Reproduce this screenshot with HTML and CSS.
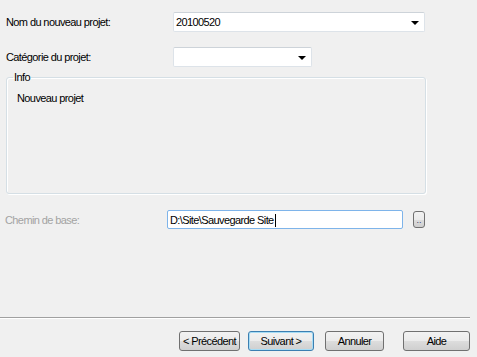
FILE: index.html
```html
<!DOCTYPE html>
<html lang="fr">

<head>
    <meta charset="UTF-8">
    <title>Nouveau projet</title>
    <link rel="stylesheet" href="styles.css">
</head>

<body>
    <div class="wizard">
        <div class="row row-name">
            <label class="lbl">Nom du nouveau projet:</label>
            <div class="combo combo-wide">
                <span class="combo-text">20100520</span>
                <span class="arrow"></span>
            </div>
        </div>

        <div class="row row-cat">
            <label class="lbl">Catégorie du projet:</label>
            <div class="combo combo-small">
                <span class="combo-text"></span>
                <span class="arrow"></span>
            </div>
        </div>

        <fieldset class="group">
            <legend class="group-title">Info</legend>
            <p class="group-text">Nouveau projet</p>
        </fieldset>

        <div class="row row-path">
            <label class="lbl lbl-off">Chemin de base:</label>
            <div class="textbox">D:\Site\Sauvegarde Site<span class="caret"></span></div>
            <button class="browse">..</button>
        </div>
    </div>

    <div class="footer">
        <button class="btn btn-prev">&lt; Précédent</button>
        <button class="btn btn-next">Suivant &gt;</button>
        <button class="btn btn-cancel">Annuler</button>
        <button class="btn btn-help">Aide</button>
    </div>
</body>

</html>
```

FILE: styles.css
```css
* {
    box-sizing: border-box;
    margin: 0;
}

body {
    width: 477px;
    height: 357px;
    background-color: #f0f0f0;
    font-family: "Liberation Sans", Arial, sans-serif;
    font-size: 11px;
    letter-spacing: -0.6px;
    color: #000;
    overflow: hidden;
}

.wizard {
    height: 317px;
    padding: 12px 0 0 6px;
}

.row {
    display: flex;
    align-items: center;
}

.lbl {
    width: 167px;
}

.lbl-off {
    color: #a3a3a3;
}

.row-cat {
    margin-top: 15px;
}

.combo {
    height: 20px;
    display: flex;
    align-items: center;
    justify-content: space-between;
    background-color: #fff;
    border: 1px solid #dde3e9;
    border-top-color: #cdd3d9;
    border-radius: 2px;
    padding: 0 5px 0 2px;
}

.combo-wide {
    width: 252px;
}

.combo-small {
    width: 139px;
}

.arrow {
    width: 0;
    height: 0;
    border-left: 4px solid transparent;
    border-right: 4px solid transparent;
    border-top: 4px solid #000;
    margin-top: 1px;
}

.group {
    width: 420px;
    height: 123px;
    margin-top: 4px;
    border: 1px solid #d5dfe5;
    border-radius: 3px;
    box-shadow: inset 1px 1px 0 #fff, 1px 1px 0 #fff;
    padding: 4px 10px;
}

.group-title {
    padding: 0 1px;
    margin-left: -4px;
}

.group-text {
    margin-top: 5px;
}

.row-path {
    margin-top: 16px;
    margin-left: -1px;
}

.row-path .lbl {
    width: 162px;
}

.textbox {
    width: 236px;
    height: 19px;
    background-color: #fff;
    border: 1px solid #7eb4ea;
    border-radius: 2px;
    padding: 2px 2px 0;
    display: flex;
    align-items: center;
    line-height: 13px;
}

.caret {
    display: inline-block;
    width: 1px;
    height: 13px;
    margin-left: 1px;
    background-color: #000;
}

.browse {
    width: 12px;
    height: 17px;
    margin-left: 10px;
    padding: 0;
    font-family: inherit;
    font-size: 9px;
    line-height: 17px;
    color: #3c3c6c;
    background: linear-gradient(#f2f2f2, #ebebeb 50%, #dddddd 51%, #cfcfcf);
    border: 1px solid #707070;
    border-radius: 3px;
}

.footer {
    width: 470px;
    border-top: 1px solid #a0a0a0;
    box-shadow: inset 0 1px 0 #fff;
    padding: 13px 0 0 179px;
    display: flex;
}

.btn {
    height: 20px;
    padding: 0;
    white-space: nowrap;
    font-family: inherit;
    font-size: 11px;
    letter-spacing: -0.6px;
    color: #000;
    background: linear-gradient(#f2f2f2, #ebebeb 50%, #dddddd 51%, #cfcfcf);
    border: 1px solid #707070;
    border-radius: 3px;
}

.btn-prev {
    width: 61px;
}

.btn-next {
    width: 66px;
    margin-left: 8px;
    border-color: #3c7fb1;
    box-shadow: inset 0 0 0 1px #a6dcf5;
}

.btn-cancel {
    width: 59px;
    margin-left: 11px;
}

.btn-help {
    width: 67px;
    margin-left: 19px;
}
```
